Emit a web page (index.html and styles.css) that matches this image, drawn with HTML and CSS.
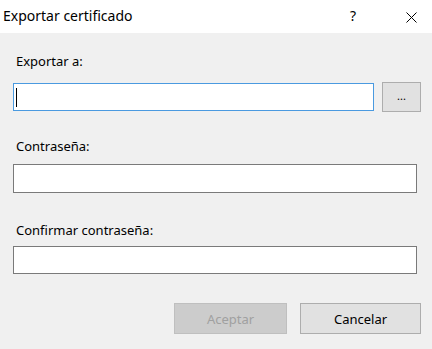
FILE: index.html
```html
<!DOCTYPE html>
<html lang="es">
<head>
<meta charset="utf-8">
<title>Exportar certificado</title>
<link rel="stylesheet" href="styles.css">
</head>
<body>
<div class="dialog">
  <div class="titlebar">
    <span class="title">Exportar certificado</span>
    <span class="help">?</span>
    <span class="close"><svg width="11" height="11" viewBox="0 0 11 11"><path d="M0.5 0.5L10.5 10.5M10.5 0.5L0.5 10.5" stroke="#000" stroke-width="1" fill="none"/></svg></span>
  </div>
  <div class="content">
    <div class="label l1">Exportar a:</div>
    <div class="row">
      <div class="input focused"><span class="caret"></span></div>
      <div class="btn browse">...</div>
    </div>
    <div class="label l2">Contraseña:</div>
    <div class="input full pw"></div>
    <div class="label l3">Confirmar contraseña:</div>
    <div class="input full pw2"></div>
    <div class="actions">
      <div class="btn ok disabled">Aceptar</div>
      <div class="btn cancel">Cancelar</div>
    </div>
  </div>
</div>
</body>
</html>
```

FILE: styles.css
```css
* { box-sizing: border-box; }
html, body { margin: 0; padding: 0; }
body {
  width: 432px;
  height: 349px;
  background: #f0f0f0;
  font-family: "Noto Sans", "Open Sans", sans-serif;
  font-size: 13px;
  color: #000;
  overflow: hidden;
}
.dialog { width: 432px; height: 349px; display: flex; flex-direction: column; }
.titlebar {
  height: 33px;
  background: #fff;
  display: flex;
  align-items: center;
  padding-left: 3px;
  flex-shrink: 0;
}
.title { font-size: 14px; flex: 1; line-height: 20px; margin-top: -1px; }
.help { font-size: 14px; width: 8px; margin-right: 48px; line-height: 20px; margin-top: -1px; }
.close { width: 11px; height: 11px; margin-right: 15px; display: flex; margin-top: 1px; }
.content { padding: 0 11px 0 13px; display: flex; flex-direction: column; }
.label { padding-left: 3px; line-height: 18px; font-size: 13px; }
.l1 { margin-top: 19px; }
.row { display: flex; margin-top: 12px; align-items: flex-start; }
.input {
  height: 28px;
  background: #fff;
  border: 1px solid #7a7a7a;
}
.input.focused {
  width: 361px;
  border-color: #4a9ae0;
  margin-top: 1px;
  display: flex;
  align-items: center;
  padding-left: 2px;
}
.caret { width: 1px; height: 19px; background: #000; }
.btn {
  background: #e1e1e1;
  border: 1px solid #adadad;
  display: flex;
  align-items: center;
  justify-content: center;
  font-size: 13px;
}
.browse { width: 39px; height: 30px; margin-left: 8px; font-size: 11px; padding-bottom: 3px; }
.l2 { margin-top: 25px; }
.full { width: 404px; }
.pw { height: 29px; margin-top: 9px; }
.l3 { margin-top: 28px; }
.pw2 { height: 28px; margin-top: 7px; }
.actions { display: flex; justify-content: flex-end; gap: 13px; margin-top: 29px; }
.ok { width: 113px; height: 31px; }
.cancel { width: 121px; height: 31px; }
.disabled { background: #cccccc; border-color: #bfbfbf; color: #a0a0a0; }
```
